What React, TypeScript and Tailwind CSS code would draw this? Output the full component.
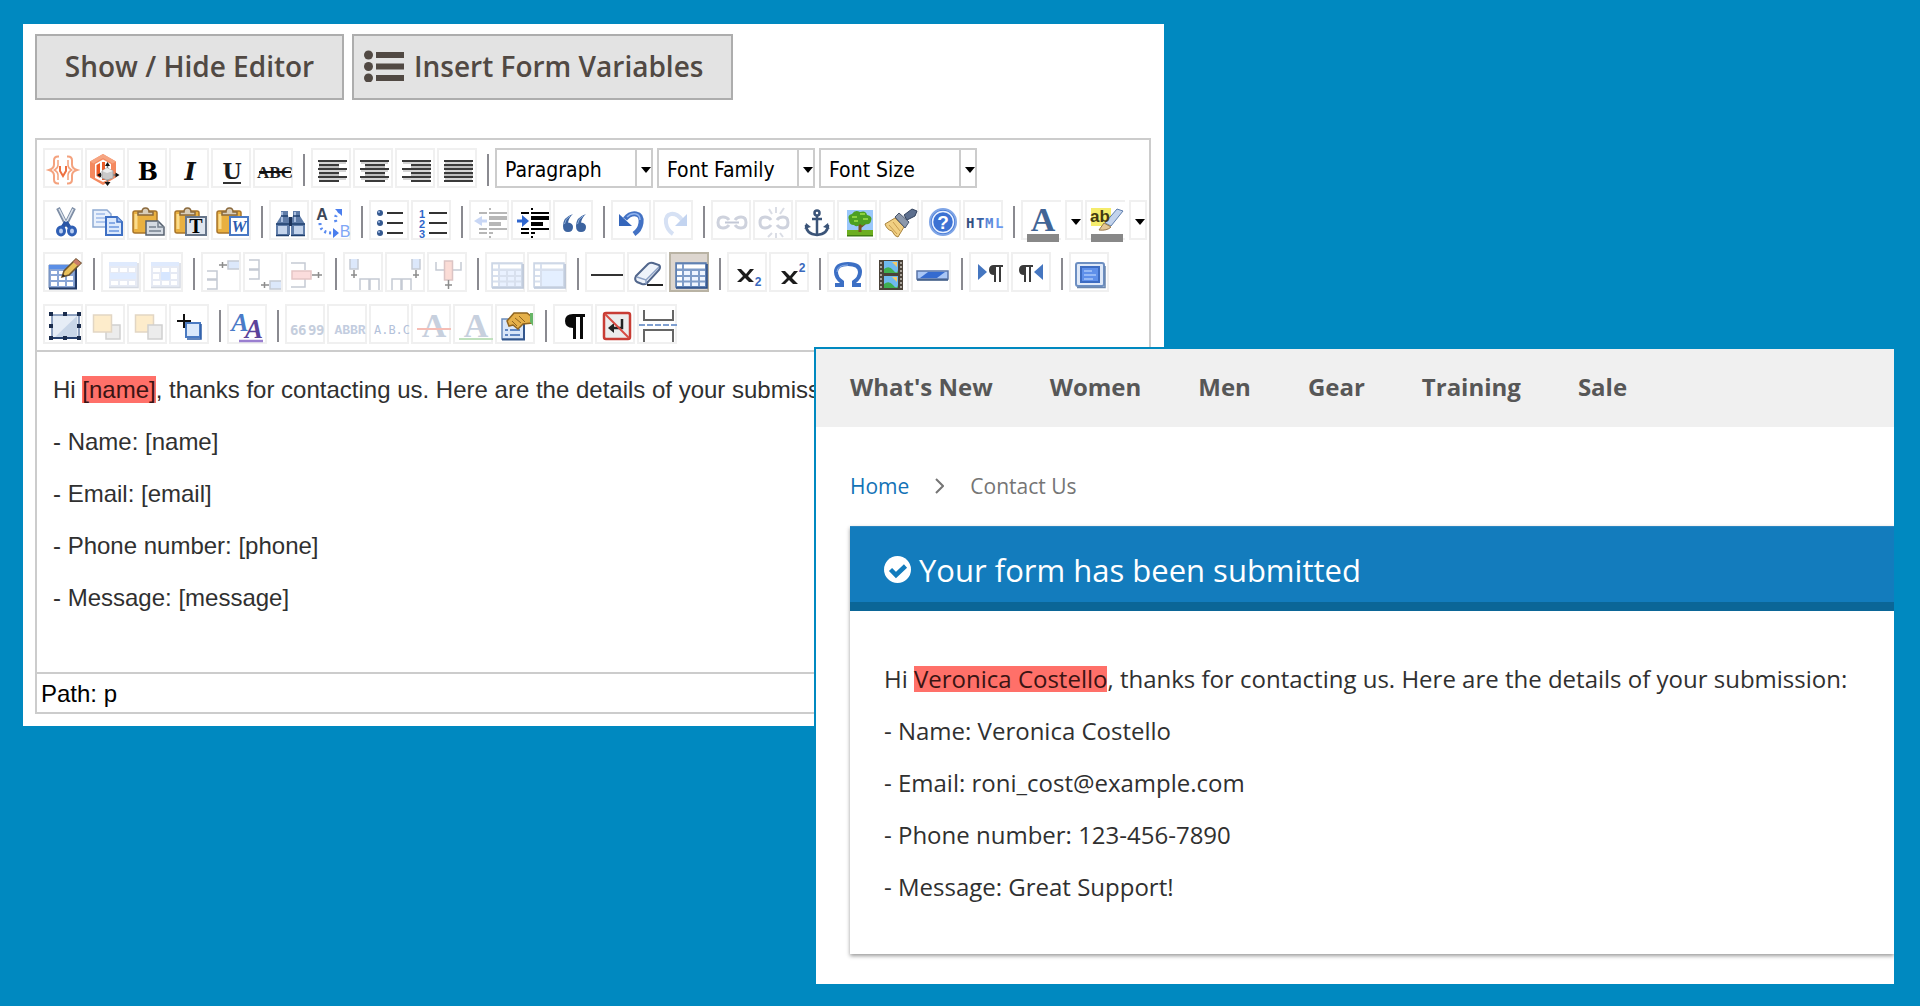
import type { ReactNode } from 'react';

const SERIF = 'Liberation Serif, serif';
const SANS = 'Liberation Sans, sans-serif';

/* ---------- shared icon parts, all on a 40x40 grid ---------- */

function AlignLines({ x, width }: { x: number; width: number }) {
  return (
    <>
      <path d="M8 15h27M8 23h27M8 31h27" stroke="#d4d4d4" strokeWidth="2" />
      <path d="M7 13h29M7 21h29M7 29h29" stroke="#3a3a3a" strokeWidth="2" />
      <path d={`M${x} 17h${width}M${x} 25h${width}M${x} 33h${width}`} stroke="#3a3a3a" strokeWidth="2" />
      <path d={`M${x} 19h${width}M${x} 27h${width}`} stroke="#bdbdbd" strokeWidth="2" />
    </>
  );
}

function Clipboard() {
  return (
    <>
      <rect x="6" y="11" width="24" height="22" rx="2" fill="#e9b040" stroke="#a8742a" strokeWidth="1.5" />
      <path d="M9 14v15" stroke="#fbdc8c" strokeWidth="3" />
      <path d="M11 15v-3h4q0-4 3.500-4t3.500 4h4v3z" fill="#d9cdb8" stroke="#8b6a3d" strokeWidth="1.500" />
    </>
  );
}

function Table({ light, merged }: { light?: boolean; merged?: boolean }) {
  return (
    <g opacity={light ? 0.3 : 1}>
      <rect x="7" y="11" width="30" height="24" fill="#7f9cc8" stroke="#5578ac" strokeWidth="1.500" />
      <path d="M8 12.500h5v4H8zM15 12.500h21v4H15zM8 19h5v4H8zM8 25h5v3.500H8zM8 30.500h5V34H8z" fill="#fff" />
      {merged ? (
        <path d="M15 19h21v15H15z" fill="#a9ccff" />
      ) : (
        <path d="M15 19h6v4h-6zM23 19h6v4h-6zM31 19h5v4h-5zM15 25h6v3.500h-6zM23 25h6v3.500h-6zM31 25h5v3.500h-5zM15 30.500h6V34h-6zM23 30.500h6V34h-6zM31 30.500h5V34h-5z" fill={light ? '#b9d4ff' : '#eef4ff'} />
      )}
      <path d="M7 36h31V12" fill="none" stroke="#254a86" strokeWidth="1.500" />
    </g>
  );
}

function PropsTable({ cell }: { cell?: boolean }) {
  return (
    <g opacity="0.35">
      <path d="M8 10h28v25H8z" fill="#b9c6e0" />
      <path d="M8 10h28v4H8z" fill="#a5c5fa" />
      <path d="M10 16h7v4h-7zM19 16h7v4h-7zM28 16h6v4h-6zM10 29h7v4h-7zM19 29h7v4h-7zM28 29h6v4h-6z" fill="#fff" />
      {cell ? (
        <>
          <path d="M10 22h6v5h-6zM28 22h6v5h-6z" fill="#fff" />
          <path d="M18 20h9v8h-9z" fill="#8db8ff" />
        </>
      ) : (
        <path d="M9 21h26v6H9z" fill="#a5c8ff" />
      )}
      <path d="M8 35.500h29V11" fill="none" stroke="#8794ad" strokeWidth="1.500" />
    </g>
  );
}

function Indent({ out }: { out?: boolean }) {
  return (
    <g opacity={out ? 0.28 : 1}>
      <path d="M20 9h2M10 13h8M20 13h18M10 29h8M20 29h18M10 33h8M20 33h4M20 37h2" stroke="#000" strokeWidth="2" />
      <path d="M20 18h18M20 24h12" stroke="#000" strokeWidth="4" />
      {out ? (
        <path d="M5 21l8-5v3.500h5v3h-5V26z" fill="#3f74dd" />
      ) : (
        <path d="M18 21l-7-6v4.500H6v3h5V27z" fill="#2f66cf" />
      )}
    </g>
  );
}

function Chain() {
  return (
    <path
      d="M18 20q-2-3-6-3-5 0-5 5.500T12 28q4 0 6-3M24 20q2-3 6-3 5 0 5 5.500T30 28q-4 0-6-3"
      fill="none"
      stroke="#ced2dd"
      strokeWidth="3"
    />
  );
}

function Layers({ back }: { back?: boolean }) {
  const cream = <rect x="8.500" y="11" width="18" height="17" fill="#fdeccb" stroke="#e2d6c4" strokeWidth="1.500" />;
  const gray = <rect x="21" y="21" width="14" height="14" fill="#ececec" stroke="#d0d0d0" strokeWidth="1.500" />;
  return back ? <>{cream}{gray}</> : <>{gray}{cream}</>;
}

function Letter({ x, y, size, fill, family = SERIF, bold = true, italic, children }: {
  x: number;
  y: number;
  size: number;
  fill: string;
  family?: string;
  bold?: boolean;
  italic?: boolean;
  children: string;
}) {
  return (
    <text
      x={x}
      y={y}
      fontSize={size}
      fill={fill}
      fontFamily={family}
      fontWeight={bold ? 700 : 400}
      fontStyle={italic ? 'italic' : 'normal'}
      textAnchor="middle"
    >
      {children}
    </text>
  );
}

/* ---------- icons ---------- */

const ICONS: Record<string, ReactNode> = {
  Variable: (
    <g fill="none" stroke="#f4a27e" strokeWidth="2">
      <path d="M16 8.500h-1q-4 0-4 4v4q0 4-5 5.500 5 1.500 5 5.500v4q0 4 4 4h1" />
      <path d="M15 12v5q0 3-3.500 5 3.500 2 3.500 5v5" strokeWidth="1.500" />
      <path d="M24 8.500h1q4 0 4 4v4q0 4 5 5.500-5 1.500-5 5.500v4q0 4-4 4h-1" />
      <path d="M25 12v5q0 3 3.500 5-3.500 2-3.500 5v5" strokeWidth="1.500" />
      <path d="M17 18v5l3 5 3-5v-5" stroke="#ee7040" />
    </g>
  ),
  Widget: (
    <>
      <path d="M18 6l13 7.500v16L18 37 5 29.500v-16z" fill="#f4895f" />
      <path d="M18 6l13 7.500-3.500 2L18 10l-9.500 5.500-3.500-2z" fill="#f6a582" />
      <path d="M10 16l8-4.500 8 4.500v14l-8 4-8-4z" fill="#fff" />
      <path d="M11.500 17l3.500-2v15l-3.500-2zM17 14h3v18h-3z" fill="#ea5b28" />
      <path d="M22.500 16v20M13 27h20" stroke="#777" strokeWidth="1.500" />
      <path d="M22.500 14l2.500 4h-5zM22.500 38l3-4h-6zM12 27l4-2.500v5zM34.500 27l-4-2.500v5z" fill="#111" />
      <path d="M17 23l5-3 6 3v7l-6 2-5-2z" fill="#c9c9c9" stroke="#a5a5a5" />
      <path d="M17 23l5-3 6 3-6 2z" fill="#ededed" />
    </>
  ),
  Bold: <Letter x={21} y={32} size={24} fill="#000" family="DejaVu Serif, serif">B</Letter>,
  Italic: <Letter x={21} y={32} size={24} fill="#111" family="DejaVu Serif, serif" italic>I</Letter>,
  Underline: (
    <>
      <Letter x={21} y={31} size={22} fill="#1c1c1c" family="DejaVu Serif, serif">U</Letter>
      <path d="M12 35h18" stroke="#333" strokeWidth="2" />
    </>
  ),
  Strikethrough: (
    <>
      <Letter x={22} y={30} size={17} fill="#222">ABC</Letter>
      <path d="M6 24h32" stroke="#111" strokeWidth="2" />
    </>
  ),
  'Align Left': <AlignLines x={8} width={20} />,
  'Align Center': <AlignLines x={12} width={20} />,
  'Align Right': <AlignLines x={16} width={20} />,
  'Align Full': <AlignLines x={7} width={29} />,
  Cut: (
    <>
      <path d="M15 8l9 18M31 8l-9 18" stroke="#7e8ea6" strokeWidth="4" />
      <path d="M16 9l7 14" stroke="#dde5ee" strokeWidth="1.500" />
      <path d="M30 9l-7 14" stroke="#dde5ee" strokeWidth="1.500" />
      <path d="M23 22l-4 6M23 22l4 6" stroke="#2a56a5" strokeWidth="4" />
      <ellipse cx="18" cy="31" rx="3.500" ry="4" fill="#b9cdf0" stroke="#2f5fb5" strokeWidth="3" />
      <ellipse cx="29" cy="31" rx="3.500" ry="4" fill="#b9cdf0" stroke="#2f5fb5" strokeWidth="3" />
    </>
  ),
  Copy: (
    <>
      <path d="M8 10h14l4 4v13H8z" fill="#e9f1fc" stroke="#8faad2" strokeWidth="1.500" />
      <path d="M11 14h9M11 18h11M11 22h11" stroke="#9ebbe8" strokeWidth="1.500" />
      <path d="M21 17h11l5 5v13H21z" fill="#dce9fc" stroke="#3f70c4" strokeWidth="2" />
      <path d="M32 17v5h5" fill="#9cbcf0" stroke="#3f70c4" strokeWidth="1.500" />
      <path d="M24 23h6M24 27h10M24 31h10" stroke="#6b96de" strokeWidth="1.500" />
    </>
  ),
  Paste: (
    <>
      <Clipboard />
      <path d="M19 21h12l6 6v8H19z" fill="#d5dbe3" stroke="#55606f" strokeWidth="1.500" />
      <path d="M31 21v6h6M22 27h7M22 31h12" fill="none" stroke="#76818f" strokeWidth="1.500" />
    </>
  ),
  'Paste as Plain Text': (
    <>
      <Clipboard />
      <path d="M17 17h20v18H17z" fill="#dfe5ee" stroke="#66758a" strokeWidth="2" />
      <Letter x={27} y={33} size={20} fill="#000">T</Letter>
    </>
  ),
  'Paste from Word': (
    <>
      <Clipboard />
      <path d="M19 17h18v18H19z" fill="#fff" stroke="#4a79c4" strokeWidth="2" />
      <Letter x={28} y={32} size={17} fill="#2c5cb0" italic>W</Letter>
    </>
  ),
  Find: (
    <>
      <path d="M12 11h7v5l2 4v15H7V24l5-8zM24 11h7v5l5 8v11H22V20l2-4z" fill="#5f7ca8" />
      <path d="M20 17h3v9h-3z" fill="#1e355c" />
      <path d="M9 26h9v8H9zM25 26h9v8h-9z" fill="#c4d4ec" />
      <path d="M13 12v10M26 12v10" stroke="#aabfe0" strokeWidth="2" />
      <path d="M7 24h13M23 24h13M12 16h7M24 16h7M7 35.500h13M22 35.500h14" stroke="#20406f" strokeWidth="1.500" />
    </>
  ),
  'Find/Replace': (
    <>
      <Letter x={11} y={20} size={16} fill="#3c4657" family={SANS}>A</Letter>
      <path d="M9 23q0 10 12 10M25 22q-2-6 3-10" fill="none" stroke="#5a8bf0" strokeWidth="3" strokeDasharray="2 3" />
      <path d="M22 28v10l6-5zM24 9h7v7z" fill="#4a7eee" />
      <Letter x={34} y={37} size={16} fill="#7fa6f6" family={SANS} bold={false}>B</Letter>
    </>
  ),
  'Unordered List': (
    <>
      <path d="M18 13h16M18 23h16M18 33h16" stroke="#333" strokeWidth="2" />
      {[13, 23, 33].map((cy) => (
        <g key={cy}>
          <circle cx="11" cy={cy} r="3" fill="#34588f" />
          <circle cx="10" cy={cy - 1} r="1" fill="#9db9e4" />
        </g>
      ))}
    </>
  ),
  'Ordered List': (
    <>
      <path d="M18 13h18M18 23h18M18 33h18" stroke="#333" strokeWidth="2" />
      <Letter x={11} y={18} size={11} fill="#2f66c9" family={SANS}>1</Letter>
      <Letter x={11} y={28} size={11} fill="#2f66c9" family={SANS}>2</Letter>
      <Letter x={11} y={38} size={11} fill="#2f66c9" family={SANS}>3</Letter>
    </>
  ),
  Outdent: <Indent out />,
  Indent: <Indent />,
  Blockquote: (
    <>
      <path d="M20 14q-10 3-10 12 0 6 5 6 5 0 5-5 0-4-5-4.500 1-5 5-8.500zM33 14q-10 3-10 12 0 6 5 6 5 0 5-5 0-4-5-4.500 1-5 5-8.500z" fill="#3c639f" />
      <path d="M17 16q-5 3-5.500 8M30 16q-5 3-5.500 8" fill="none" stroke="#8fb0dc" />
    </>
  ),
  Undo: (
    <>
      <path d="M14 19q5-6 11-5 6 1 5 9-1 7-7 11" fill="none" stroke="#4372c4" strokeWidth="5" />
      <path d="M16 17q4-4 9-3 4 1 4 6" fill="none" stroke="#8fb3ee" strokeWidth="1.500" />
      <path d="M8 14v12h13z" fill="#3566bb" />
    </>
  ),
  Redo: (
    <>
      <path d="M29 20q-5-7-11-6-6 1-5 9 1 7 7 11" fill="none" stroke="#d6e1f4" strokeWidth="4" />
      <path d="M34 14v12H22z" fill="#c3d4f0" />
    </>
  ),
  Link: (
    <>
      <Chain />
      <path d="M14 22.500h14" stroke="#c3c8d6" strokeWidth="2" />
    </>
  ),
  Unlink: (
    <>
      <Chain />
      <path d="M16 9l3 5M23 7v6M31 8l-4 6M15 37l4-4M23 38v-5M30 37l-3-4" stroke="#dadde5" strokeWidth="2" />
    </>
  ),
  Anchor: (
    <g fill="none" stroke="#3b5478" strokeWidth="2.500">
      <circle cx="22" cy="13" r="2.500" />
      <path d="M22 16v18M17 19h10M11 25q0 9 11 10 11-1 11-10" />
      <path d="M9.500 29l1.500-6 5 4zM34.500 29L33 23l-5 4z" fill="#3b5478" stroke="none" />
    </g>
  ),
  Image: (
    <>
      <path d="M10 10h26v21H10z" fill="#9ac7fb" />
      <path d="M10 30h26v6H10z" fill="#6cae1f" />
      <path d="M10 35h26v1.500H10z" fill="#3f7d10" />
      <path d="M23 20v12M23 27l6-5M23 25l-5-4" stroke="#7a4f21" strokeWidth="3" />
      <path d="M12 20q-2-5 3-6 3-5 8-2 6-2 7 3 6 1 4 6-1 4-6 3-2 3-5 0-3 4-6 1-5 0-5-5z" fill="#4c9f22" />
      <path d="M15 17h5M23 14h5M26 19h5M17 21h4" stroke="#8bd040" strokeWidth="2" />
    </>
  ),
  'Cleanup Messy Code': (
    <>
      <path d="M6 24l10-6 9 9-6 10q-3 0-6-6-5-1-7-7z" fill="#f1cf82" stroke="#a88440" />
      <path d="M10 25l8 9M14 22l7 9" stroke="#c89c4f" />
      <path d="M16 17l4-4 10 9-4 6z" fill="#8c98ab" stroke="#48556d" />
      <path d="M25 15l8-6 5 2-2 5-8 4z" fill="#5d6f8e" stroke="#34435e" />
    </>
  ),
  Help: (
    <>
      <circle cx="22" cy="22" r="13" fill="#3c72d3" stroke="#7fa5e6" strokeWidth="2" />
      <circle cx="22" cy="22" r="10.500" fill="none" stroke="#e9f1ff" strokeWidth="1.500" />
      <Letter x={22} y={29} size={19} fill="#fff" family={SANS}>?</Letter>
    </>
  ),
  'Edit HTML Source': (
    <text y="28" fontSize="14" fontFamily="DejaVu Sans Mono, monospace" fontWeight="700">
      <tspan x="3" fill="#33507f">H</tspan>
      <tspan x="13" fill="#3a62a5">T</tspan>
      <tspan x="22" fill="#5b86d8">M</tspan>
      <tspan x="32" fill="#6c9af0">L</tspan>
    </text>
  ),
  'Text Color': (
    <>
      <Letter x={22} y={31} size={34} fill="#416596">A</Letter>
      <path d="M6 34h32v8H6z" fill="#888" />
    </>
  ),
  'Background Color': (
    <>
      <path d="M6 8h20v18H6z" fill="#f5ec6c" />
      <path d="M20 23l12-14 6 2-12 15z" fill="#c3d3ec" stroke="#5f7fae" />
      <path d="M14 30l5-7 7 4q-4 4-12 3z" fill="#e3c795" stroke="#9a7a4c" />
      <Letter x={15} y={22} size={17} fill="#433a12" family={SANS}>ab</Letter>
      <path d="M6 34h32v8H6z" fill="#888" />
    </>
  ),
  'Insert Table': (
    <>
      <path d="M6 13h26v23H6z" fill="#8aa6d6" stroke="#6b86b4" />
      <path d="M6 13h26v4H6z" fill="#5b8fe6" />
      <path d="M8 19h6v3H8zM16 19h6v3h-6zM8 24h6v4H8zM16 24h6v4h-6zM24 24h6v4h-6zM8 30h6v4H8zM16 30h6v4h-6zM24 30h6v4h-6z" fill="#fff" />
      <path d="M6 36.500h27V15" fill="none" stroke="#223a66" strokeWidth="2" />
      <path d="M19 25l2-6L33 7l5 4-12 12z" fill="#e8c05a" stroke="#6c5430" strokeWidth="1.500" />
      <path d="M30 10l3-3 5 4-3 3z" fill="#c97b68" />
      <path d="M19 25l1-3 2 2z" fill="#222" />
    </>
  ),
  'Table Row Properties': <PropsTable />,
  'Table Cell Properties': <PropsTable cell />,
  'Insert Row Before': (
    <g fill="none" stroke="#c5cad4" strokeWidth="1.500">
      <path d="M6 19h10v8H6M6 28h10v9H6" />
      <path d="M38 9H27v8h11" fill="#dce8fb" />
      <path d="M18 13h8M21.500 10v6" stroke="#8c8c8c" />
    </g>
  ),
  'Insert Row After': (
    <g fill="none" stroke="#c5cad4" strokeWidth="1.500">
      <path d="M6 8h10v9H6M6 18h10v9H6" />
      <path d="M38 29H27v8h11" fill="#dce8fb" />
      <path d="M18 33h8M21.500 30v6" stroke="#8c8c8c" />
    </g>
  ),
  'Delete Row': (
    <g fill="none" stroke="#c5cad4" strokeWidth="1.500">
      <path d="M6 11h14v7M6 35h14v-8" />
      <path d="M7 19h19v8H7z" fill="#fbdcdc" stroke="#e5c5c5" />
      <path d="M27 23h10M33.500 20v6" stroke="#8c8c8c" />
    </g>
  ),
  'Insert Column Before': (
    <g fill="none" stroke="#c5cad4" strokeWidth="1.500">
      <path d="M7 7v10h8V7" fill="#dce8fb" />
      <path d="M11 18v8M8 23h6" stroke="#8c8c8c" />
      <path d="M17 38V27h9v11M27 38V27h9v11" />
    </g>
  ),
  'Insert Column After': (
    <g fill="none" stroke="#c5cad4" strokeWidth="1.500">
      <path d="M27 7v10h8V7" fill="#dce8fb" />
      <path d="M31 18v8M28 23h6" stroke="#8c8c8c" />
      <path d="M7 38V27h9v11M17 38V27h9v11" />
    </g>
  ),
  'Remove Column': (
    <g fill="none" stroke="#c5cad4" strokeWidth="1.500">
      <path d="M9 10v8h8M34 10v8h-8" />
      <path d="M17.500 9h8v19h-8z" fill="#fbdcd6" stroke="#dcc4c4" />
      <path d="M21.500 28v9M18 33h7" stroke="#8c8c8c" />
    </g>
  ),
  'Split Cells': <Table light />,
  'Merge Cells': <Table light merged />,
  'Horizontal Line': <path d="M6 23h32" stroke="#333" strokeWidth="2" />,
  'Remove Formatting': (
    <>
      <path d="M9 24l12-12q2-2 5-1l6 2q2 2 0 5L20 31q-2 2-5 1l-5-2q-3-2-1-6z" fill="#eef3fa" stroke="#51668c" strokeWidth="2" />
      <path d="M10 25l9 3 13-13M19 28v4" fill="none" stroke="#8ba0c4" strokeWidth="1.500" />
      <path d="M20 33h16" stroke="#222" strokeWidth="2" />
    </>
  ),
  'Toggle Guidelines': <Table />,
  Subscript: (
    <>
      <path d="M10 17h4l5 5 4-5h4l-6 7 6 6h-5l-4-4-4 4h-4l6-6z" fill="#1c1c1c" />
      <Letter x={31} y={34} size={12} fill="#3a68bd" family={SANS}>2</Letter>
    </>
  ),
  Superscript: (
    <>
      <path d="M12 19h4l5 5 4-5h4l-6 7 6 6h-5l-4-4-4 4h-4l6-6z" fill="#1c1c1c" />
      <Letter x={33} y={20} size={12} fill="#3a68bd" family={SANS}>2</Letter>
    </>
  ),
  'Insert Custom Character': (
    <>
      <path d="M8 33h7v-3q-6-4-6-10 0-8 12-8t12 8q0 6-6 10v3h7" fill="none" stroke="#3c6fc4" strokeWidth="4" />
      <path d="M10 20q0-7 11-7" fill="none" stroke="#8db0ea" />
    </>
  ),
  'Insert Media': (
    <>
      <path d="M10 8h24v30H10z" fill="#4a4238" />
      <path d="M12 10v27M32 10v27" stroke="#a9a39a" strokeWidth="2" strokeDasharray="2 2" />
      <path d="M15 9h14v12H15zM15 24h14v12H15z" fill="#6fb9ee" />
      <path d="M15 17q5-4 9 1t5 0v3H15zM15 32q5-4 9 1t5 0v3H15z" fill="#3fae4f" />
      <path d="M23 10h5v5zM23 25h5v5z" fill="#f3c968" />
    </>
  ),
  'Insert Horizontal Rule': (
    <>
      <path d="M6 19h31v8H6z" fill="#a9c6f6" stroke="#5b76a8" strokeWidth="1.500" />
      <path d="M9 26l8-6h17l-8 6z" fill="#356bd0" />
      <path d="M6 28h31" stroke="#33527f" strokeWidth="1.500" />
    </>
  ),
  'Direction Left to Right': (
    <>
      <path d="M9 12v16l9-8z" fill="#4576c0" />
      <path d="M34 13h-9q-5 0-5 5t5 5v7h2V15h3v15h2V15h2z" fill="#3a3a3a" />
    </>
  ),
  'Direction Right to Left': (
    <>
      <path d="M32 12v16l-9-8z" fill="#4576c0" />
      <path d="M22 13h-9q-5 0-5 5t5 5v7h2V15h3v15h2V15h2z" fill="#3a3a3a" />
    </>
  ),
  'Toggle Fullscreen': (
    <>
      <rect x="7" y="11" width="28" height="23" rx="2" fill="#dfe9f8" stroke="#6d8fc2" strokeWidth="2" />
      <path d="M12 15h18v15H12z" fill="#5f90ea" stroke="#3d6cc2" strokeWidth="2" />
      <path d="M15 19h8M15 23h12M15 27h9" stroke="#a8c6fa" strokeWidth="1.500" />
      <path d="M8 35.500h28V14" fill="none" stroke="#6a86ae" strokeWidth="1.500" />
    </>
  ),
  'Insert New Layer': (
    <>
      <path d="M9 11h27v23H9z" fill="#e6edf6" stroke="#6f86ad" strokeWidth="1.500" />
      <path d="M34 12v21H12z" fill="#b4c6e0" opacity="0.6" />
      <path d="M9 34h27" stroke="#26406e" strokeWidth="2" />
      <path d="M6 8h4v4H6zM20 8h4v4h-4zM34 8h4v4h-4zM6 20h4v4H6zM34 20h4v4h-4zM6 32h4v4H6zM20 32h4v4h-4zM34 32h4v4h-4z" fill="#1a2c4d" />
    </>
  ),
  'Move Forward': <Layers />,
  'Move Backward': <Layers back />,
  'Toggle Absolute Positioning': (
    <>
      <path d="M17 19h14v14H17z" fill="#dbe9fb" stroke="#4a7ac2" strokeWidth="2" />
      <path d="M18 35h14V20" fill="none" stroke="#2d5ca6" strokeWidth="1.500" />
      <path d="M8 17h14M15 10v14" stroke="#111" strokeWidth="2" />
    </>
  ),
  'Edit CSS Style': (
    <>
      <Letter x={13} y={27} size={26} fill="#4a7bc8" italic>A</Letter>
      <Letter x={27} y={34} size={27} fill="#5b429a" italic>A</Letter>
      <path d="M12 37h24" stroke="#9a7fd0" strokeWidth="2.500" />
    </>
  ),
  Citation: (
    <text y="31" fontSize="14" fontFamily="DejaVu Sans Mono, monospace" fontWeight="700" fill="#c5cedd">
      <tspan x="5">6</tspan>
      <tspan x="13">6</tspan>
      <tspan x="23">9</tspan>
      <tspan x="31">9</tspan>
    </text>
  ),
  Abbreviation: <Letter x={23} y={30} size={13} fill="#c3cddf" family="Liberation Mono, monospace">ABBR</Letter>,
  Acronym: <Letter x={23} y={30} size={12} fill="#b3c1da" family="DejaVu Sans Mono, monospace" bold={false}>A.B.C</Letter>,
  Deletion: (
    <>
      <Letter x={23} y={33} size={34} fill="#c7d0de">A</Letter>
      <path d="M6 25h34" stroke="#f5bdb5" strokeWidth="2" />
    </>
  ),
  Insertion: (
    <>
      <Letter x={23} y={33} size={34} fill="#c7d0de">A</Letter>
      <path d="M6 35h34" stroke="#bfe0bd" strokeWidth="2" />
    </>
  ),
  Attributes: (
    <>
      <path d="M7 15h22v20H7z" fill="#d9e6f8" stroke="#6b8cba" strokeWidth="1.500" />
      <path d="M7 35.500h22V18" fill="none" stroke="#33568c" strokeWidth="2" />
      <path d="M10 26h3M15 26h10M10 31h3M15 31h10" stroke="#5f86c2" strokeWidth="2" />
      <path d="M12 17l7-8h13l5 4v6l-9 1-5 5-5-4-4 1z" fill="#e5b04a" stroke="#8f6420" strokeWidth="1.500" />
      <path d="M20 14l6 5M17 17l5 5M24 12l6 6" stroke="#8f6420" />
      <path d="M35 9h3v13l-3-4z" fill="#67b567" />
    </>
  ),
  'Show Blocks': <path d="M32 10H20q-8 0-8 7t8 7v11h3V13h4v22h3V13h2z" fill="#0a0a0a" />,
  'Insert Non-breaking Space': (
    <>
      <rect x="9" y="9" width="26" height="26" rx="2" fill="#ececec" stroke="#c83c34" strokeWidth="2.500" />
      <path d="M27 15v9H16" fill="none" stroke="#222" strokeWidth="2.500" />
      <path d="M19 19l-6 5 6 5z" fill="#222" />
      <path d="M10 10l24 24" stroke="#d84a42" strokeWidth="2" />
    </>
  ),
  'Insert Page Break': (
    <>
      <path d="M7 6v10h29V6M7 38V26h29v12" fill="none" stroke="#666" strokeWidth="2" />
      <path d="M2 21h40" stroke="#7f9fd0" strokeWidth="2" strokeDasharray="6 2" />
    </>
  ),
};

type Tool = string | { select: string } | { split: string };

// '|' draws a separator between groups
const TOOLBAR: Tool[][] = [
  [
    'Variable', 'Widget', 'Bold', 'Italic', 'Underline', 'Strikethrough', '|',
    'Align Left', 'Align Center', 'Align Right', 'Align Full', '|',
    { select: 'Paragraph' }, { select: 'Font Family' }, { select: 'Font Size' },
  ],
  [
    'Cut', 'Copy', 'Paste', 'Paste as Plain Text', 'Paste from Word', '|',
    'Find', 'Find/Replace', '|',
    'Unordered List', 'Ordered List', '|',
    'Outdent', 'Indent', 'Blockquote', '|',
    'Undo', 'Redo', '|',
    'Link', 'Unlink', 'Anchor', 'Image', 'Cleanup Messy Code', 'Help', 'Edit HTML Source', '|',
    { split: 'Text Color' }, { split: 'Background Color' },
  ],
  [
    'Insert Table', '|',
    'Table Row Properties', 'Table Cell Properties', '|',
    'Insert Row Before', 'Insert Row After', 'Delete Row', '|',
    'Insert Column Before', 'Insert Column After', 'Remove Column', '|',
    'Split Cells', 'Merge Cells', '|',
    'Horizontal Line', 'Remove Formatting', 'Toggle Guidelines', '|',
    'Subscript', 'Superscript', '|',
    'Insert Custom Character', 'Insert Media', 'Insert Horizontal Rule', '|',
    'Direction Left to Right', 'Direction Right to Left', '|',
    'Toggle Fullscreen',
  ],
  [
    'Insert New Layer', 'Move Forward', 'Move Backward', 'Toggle Absolute Positioning', '|',
    'Edit CSS Style', '|',
    'Citation', 'Abbreviation', 'Acronym', 'Deletion', 'Insertion', 'Attributes', '|',
    'Show Blocks', 'Insert Non-breaking Space', 'Insert Page Break',
  ],
];

function Icon({ name }: { name: string }) {
  return (
    <svg viewBox="0 0 40 40" className="block size-10 overflow-visible" aria-hidden="true">
      {ICONS[name]}
    </svg>
  );
}

function Caret() {
  return (
    <svg viewBox="0 0 10 6" className="block h-[6px] w-[10px]" aria-hidden="true">
      <path d="M0 0h10L5 6z" fill="#000" />
    </svg>
  );
}

function ToolbarItem({ tool }: { tool: Tool }) {
  if (tool === '|') {
    return <span className="mt-[6px] mr-1 ml-2 h-8 w-[2px] shrink-0 bg-[#8a8a90]" />;
  }

  if (typeof tool === 'string') {
    return (
      <button
        type="button"
        aria-label={tool}
        className={
          tool === 'Toggle Guidelines'
            ? 'size-10 shrink-0 bg-[#ddd6cf] inset-ring-2 inset-ring-[#b9b3a4]'
            : 'size-10 shrink-0 inset-ring-2 inset-ring-[#f0f0f0]'
        }
      >
        <Icon name={tool} />
      </button>
    );
  }

  if ('select' in tool) {
    return (
      <label className="mr-[2px] flex h-10 w-[158px] shrink-0 border-2 border-[#ccc]">
        <select
          aria-label={tool.select}
          className="min-w-0 flex-1 appearance-none pt-1 pl-2 font-['DejaVu_Sans_Condensed','DejaVu_Sans',sans-serif] text-[21px] leading-8 text-black outline-none"
        >
          <option>{tool.select}</option>
        </select>
        <span className="flex w-4 items-center justify-end border-l-2 border-[#ccc] pt-1">
          <Caret />
        </span>
      </label>
    );
  }

  return (
    <span className="flex shrink-0 gap-1">
      <button
        type="button"
        aria-label={tool.split}
        className="size-10 border-2 border-r-0 border-[#f0f0f0]"
      >
        <span className="-m-[2px] block">
          <Icon name={tool.split} />
        </span>
      </button>
      <button
        type="button"
        aria-label={`${tool.split} options`}
        className="flex h-10 w-[18px] items-center justify-end border-2 border-[#f0f0f0] pt-1"
      >
        <Caret />
      </button>
    </span>
  );
}

function EditorPanel() {
  return (
    <section className="mr-[756px] ml-[23px] bg-white px-3 pt-[10px] pb-3">
      <div className="flex gap-2 font-['Open_Sans',sans-serif] text-[28px] font-semibold text-[#514943]">
        <button
          type="button"
          className="h-[66px] w-[309px] border-2 border-[#adadad] bg-[#e3e3e3] pb-[2px] whitespace-nowrap"
        >
          Show / Hide Editor
        </button>
        <button
          type="button"
          className="flex h-[66px] w-[381px] items-center gap-[10px] border-2 border-[#adadad] bg-[#e3e3e3] pb-[2px] pl-[10px] whitespace-nowrap"
        >
          <svg viewBox="0 0 40 32" className="h-8 w-10" fill="#514943" aria-hidden="true">
            <circle cx="4.500" cy="5" r="4.500" />
            <circle cx="4.500" cy="16.500" r="4.500" />
            <circle cx="4.500" cy="28" r="4.500" />
            <path d="M12 2h28v6H12zM12 13.500h28v6H12zM12 25h28v6H12z" />
          </svg>
          Insert Form Variables
        </button>
      </div>

      <div className="mt-[38px] mr-[1px] border-2 border-[#ccc]">
        <div role="toolbar" aria-label="Editor" className="flex flex-col gap-3 border-b-2 border-[#ccc] px-[6px] pt-2 pb-[6px]">
          {TOOLBAR.map((row, i) => (
            <div key={i} className="flex gap-[2px]">
              {row.map((tool, j) => (
                <ToolbarItem key={j} tool={tool} />
              ))}
            </div>
          ))}
        </div>

        <div className="h-[320px] space-y-6 overflow-hidden px-4 pt-6 font-['Liberation_Sans',sans-serif] text-[24px] leading-7 whitespace-nowrap text-[#303030]">
          <p>
            Hi <mark className="bg-[#ff7069] text-[#3a1413]">[name]</mark>, thanks for contacting us. Here are the
            details of your submission:
          </p>
          <p>- Name: [name]</p>
          <p>- Email: [email]</p>
          <p>- Phone number: [phone]</p>
          <p>- Message: [message]</p>
        </div>

        <div className="border-t-2 border-[#ccc] px-1 pt-1 pb-[2px] font-['Liberation_Sans',sans-serif] text-[24px] leading-8 text-black">
          Path: p
        </div>
      </div>
    </section>
  );
}

const NAV = ["What's New", 'Women', 'Men', 'Gear', 'Training', 'Sale'];

function StorefrontPanel() {
  return (
    <section className="relative -mt-[379px] mr-[26px] ml-[814px] overflow-hidden border-t-2 border-l-2 border-[#0089c0] bg-white pb-[30px] font-['Open_Sans',sans-serif]">
      <nav className="flex h-[78px] gap-[57px] bg-[#f0f0f0] pt-5 pl-[34px] text-[24px] leading-9 font-bold whitespace-nowrap text-[#575757]">
        {NAV.map((item) => (
          <a key={item} href="#">
            {item}
          </a>
        ))}
      </nav>

      <div className="flex items-center gap-[26px] pt-[43px] pl-[34px] text-[21px] leading-8 whitespace-nowrap text-[#757575]">
        <a href="#" className="text-[#1272b6]">
          Home
        </a>
        <svg viewBox="0 0 9 16" className="h-4 w-[9px]" fill="none" stroke="#757575" strokeWidth="2" aria-hidden="true">
          <path d="M1 1l7 7-7 7" />
        </svg>
        <span>Contact Us</span>
      </div>

      <div className="mt-6 ml-[34px] shadow-[0_2px_4px_rgba(0,0,0,0.4)]">
        <h1 className="flex h-[85px] items-center gap-2 border-t border-b-9 border-t-[#2b86c0] border-b-[#0b6697] bg-[#137cbd] pt-[10px] pl-[34px] text-[31px] leading-10 whitespace-nowrap text-white">
          <svg viewBox="0 0 27 27" className="size-[27px]" aria-hidden="true">
            <circle cx="13.500" cy="13.500" r="13.500" fill="#fff" />
            <path d="M6.500 13.500l5.500 5.500 9.500-9" fill="none" stroke="#137cbd" strokeWidth="4.500" />
          </svg>
          Your form has been submitted
        </h1>
        <div className="space-y-4 px-[34px] pt-[50px] pb-[49px] text-[24px] leading-9 whitespace-nowrap text-[#303030]">
          <p>
            Hi <mark className="inline-block bg-[#ff7069] leading-[26px] text-[#3a1413]">Veronica Costello</mark>, thanks for
            contacting us. Here are the details of your submission:
          </p>
          <p>- Name: Veronica Costello</p>
          <p>- Email: roni_cost@example.com</p>
          <p>- Phone number: 123-456-7890</p>
          <p>- Message: Great Support!</p>
        </div>
      </div>
    </section>
  );
}

export default function App() {
  return (
    <main className="min-h-screen bg-[#0089c0] pt-6 pb-[22px]">
      <EditorPanel />
      <StorefrontPanel />
    </main>
  );
}
